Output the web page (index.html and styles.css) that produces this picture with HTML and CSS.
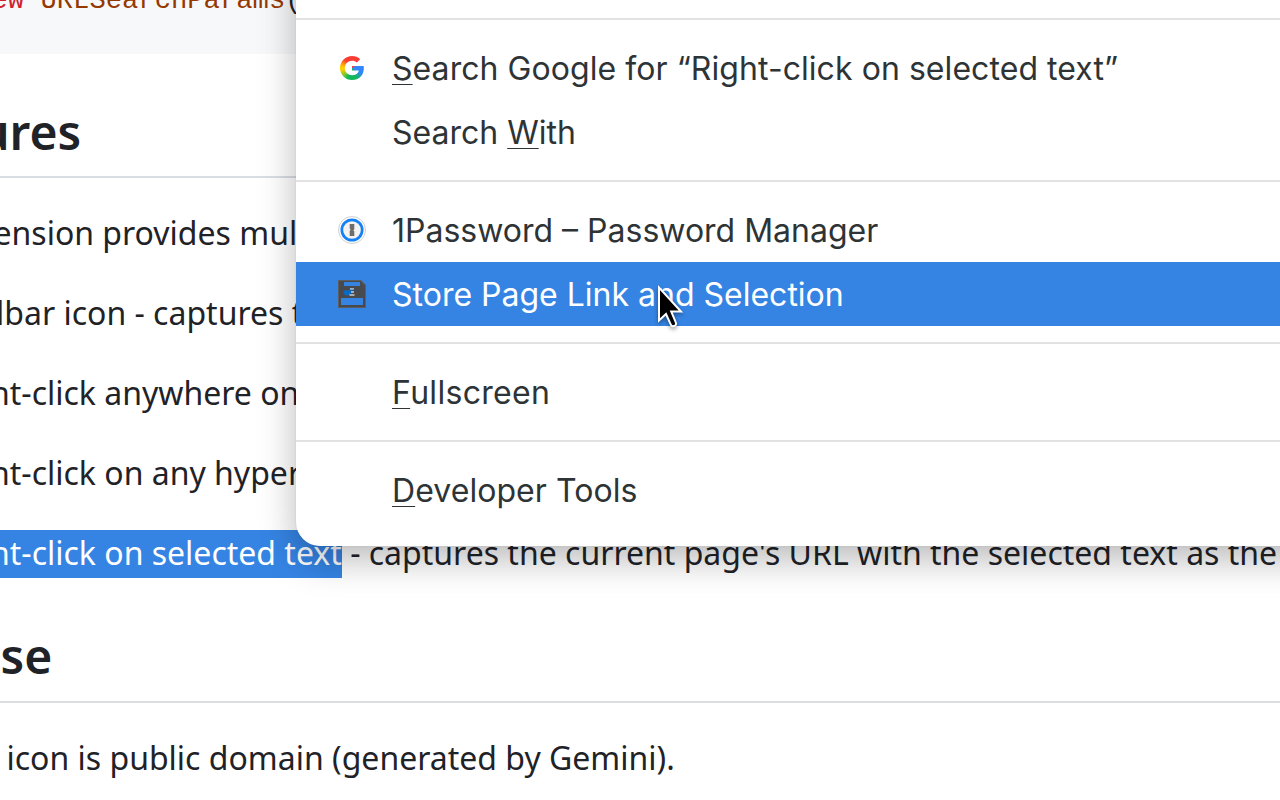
FILE: index.html
```html
<!DOCTYPE html>
<html lang="en">
<head>
<meta charset="utf-8">
<title>Features</title>
<link rel="stylesheet" href="styles.css">
</head>
<body>
<main class="page">
  <pre class="code"><span class="kw">ew</span> <span class="fn">URLSearchParams</span>(</pre>
  <h2 class="heading heading-features">ures</h2>
  <p class="line line-intro">ension provides mul</p>
  <ul class="list">
    <li class="line line-toolbar">lbar icon - captures t</li>
    <li class="line line-click">nt-click anywhere on</li>
    <li class="line line-click">nt-click on any hyper</li>
    <li class="line line-click"><span class="selected">nt-click on selected text</span> - captures the current page's URL with the selected text as the</li>
  </ul>
  <h2 class="heading heading-license">se</h2>
  <p class="line line-license">icon is public domain (generated by Gemini).</p>
</main>

<nav class="menu">
  <div class="separator"></div>
  <div class="item">
    <span class="icon"><span class="google"></span></span>
    <span class="label label-loose"><u>S</u>earch Google for “Right-click on selected text”</span>
  </div>
  <div class="item"><span class="icon"></span><span class="label">Search <u>W</u>ith</span></div>
  <div class="separator"></div>
  <div class="item">
    <svg class="icon" viewBox="0 0 32 32">
      <circle cx="16" cy="16" r="13.5" fill="#fff" stroke="#d0d0d0"/>
      <circle cx="16" cy="16" r="10.2" fill="#f4f2f0" stroke="#1481f5" stroke-width="2.7"/>
      <path d="M13.700 10h4.600v5.300l-1 1 1 1V22h-4.600v-5.200l1-1-1-1z" fill="#6c6c6c"/>
    </svg>
    <span class="label">1Password – Password Manager</span>
  </div>
  <div class="item active">
    <svg class="icon" viewBox="0 0 32 32">
      <path d="M2 2h23l5 5v23H2z" fill="#5a5d61"/>
      <path d="M3 3h21.600L29 7.400V29H3z" fill="#484a4e"/>
      <path d="M8 4h16v4H8zM5 20h22v7H5z" fill="#3584e4"/>
      <path d="M7 13l4-1 1 1.500 2-3.500h2l1 3-3 4-5 .500z" fill="#086bc8"/>
      <path d="M14 10.800h4M15 14h3M13.500 17h5" fill="none" stroke="#c8cdd2" stroke-width="1.300"/>
    </svg>
    <span class="label">Store Page Link and Selection</span>
  </div>
  <div class="separator"></div>
  <div class="item"><span class="icon"></span><span class="label label-wide"><u>F</u>ullscreen</span></div>
  <div class="separator"></div>
  <div class="item"><span class="icon"></span><span class="label label-loose"><u>D</u>eveloper Tools</span></div>
</nav>

<svg class="cursor" viewBox="0 0 32 46">
  <path d="M3 3.500v33l7-6.500 4.800 10.700q1 2.200 3.300 1.300 2.700-1 1.700-3.500L15.200 27.500H25z" fill="#000" stroke="#fff" stroke-width="2"/>
</svg>
</body>
</html>
```
FILE: styles.css
```css
* { box-sizing: border-box; }

body {
  margin: 0;
  width: 1280px;
  height: 800px;
  overflow: hidden;
  position: relative;
  background: #fff;
  color: #1f2328;
  font: 32px/48px "Noto Sans", sans-serif;
}

.page { overflow: hidden; height: 800px; }

.code {
  margin: -19px 0 0;
  height: 73px;
  background: #f6f8fa;
  font: 27.2px/40px "Liberation Mono", monospace;
  text-indent: -8.5px;
}
.kw { color: #cf222e; }
.fn { color: #953800; }

.heading {
  margin: 48px 0 32px;
  height: 76px;
  border-bottom: 2px solid #d9dee3;
  font-size: 48px;
  line-height: 60px;
  font-weight: 600;
}
.heading-features { text-indent: -21px; }
.heading-license { height: 77px; text-indent: .5px; }

.line { margin: 0; height: 48px; line-height: 46px; white-space: nowrap; }
.line-intro { text-indent: -6.5px; }
.line-toolbar { text-indent: -4px; }
.line-click { text-indent: -10px; }
.line-license { text-indent: 6.5px; }

.list { list-style: none; margin: 32px 0 0; padding: 0; display: grid; gap: 32px; }
.selected { padding: 1px 0 4px; background: #3584e4; color: #fff; }

.menu {
  position: absolute;
  left: 296px;
  right: -60px;
  top: -60px;
  height: 606px;
  padding-top: 62px;
  background: #fff;
  border-radius: 0 0 0 24px;
  box-shadow: 0 0 2px rgba(0, 0, 0, .1), 0 13px 37px rgba(0, 0, 0, .28);
  color: #2e3436;
  font: 32px/64px Inter, sans-serif;
}
.separator { height: 2px; margin: 16px 0; background: #e2e2e2; }
.item { height: 64px; display: flex; align-items: center; padding-left: 40px; gap: 24px; white-space: nowrap; }
.active { background: #3584e4; color: #fff; }
.icon { width: 32px; height: 32px; flex: none; }
.label { padding-top: 2px; }
.label-loose { letter-spacing: .06px; }
.label-wide { letter-spacing: .3px; }
.label u { text-decoration-thickness: 1px; text-underline-offset: 4px; text-decoration-skip-ink: none; }

.google {
  display: block;
  width: 24px;
  height: 24px;
  margin: 4px;
  background: conic-gradient(#fb3c35 0deg 35deg, #3086ff 75deg 120deg, #12b75b 155deg 205deg, #8ccb25 232deg, #ffcc00 260deg 275deg, #ff8a16 298deg, #fb3c35 320deg);
  clip-path: path("M12 0C15.300 0 18 1.200 20.200 3.200L16.900 6.500C15.600 5.300 14 4.700 12 4.700A7.300 7.300 0 0 0 12 19.300C15.800 19.300 18.200 17.300 18.900 14.400H12V9.900H23.700C24.800 18 20 24 12 24A12 12 0 0 1 12 0Z");
}

.cursor {
  position: absolute;
  left: 656px;
  top: 284px;
  width: 32px;
  height: 46px;
  filter: drop-shadow(0 2px 2px rgba(0, 0, 0, .4));
}
```
